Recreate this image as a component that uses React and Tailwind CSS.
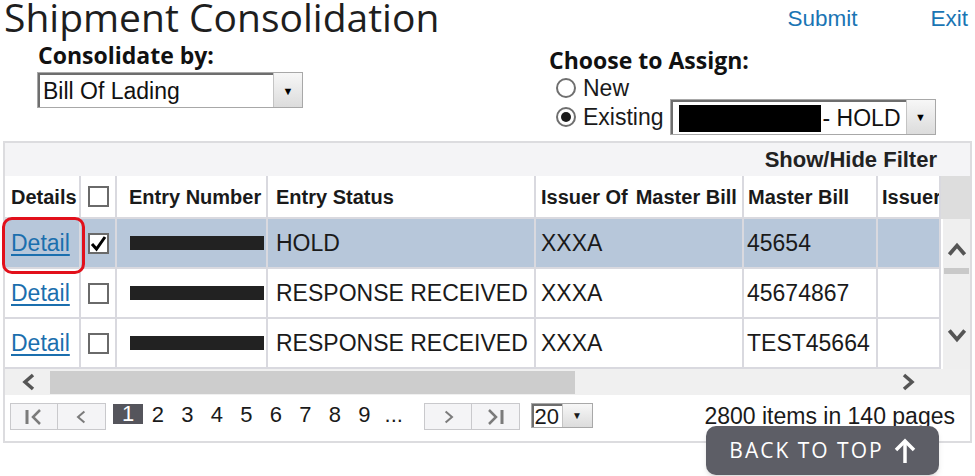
import React from "react";

const ARIAL = "font-['Liberation_Sans',Arial,sans-serif]";
const OPEN = "font-['Open_Sans',sans-serif]";

function Chevron({ dir = "up", className = "", size = 20, stroke = "#555", sw = 3.5 }) {
  const paths = {
    up: "M3 14 L10 6 L17 14",
    down: "M3 6 L10 14 L17 6",
    left: "M13 3 L5 10 L13 17",
    right: "M7 3 L15 10 L7 17",
  };
  return (
    <svg width={size} height={size} viewBox="0 0 20 20" className={className}>
      <path d={paths[dir]} fill="none" stroke={stroke} strokeWidth={sw} strokeLinecap="butt" strokeLinejoin="miter" />
    </svg>
  );
}

function SelectBox({ widthClass, children, btnW = "w-[29px]" }) {
  return (
    <div className={`flex h-[36px] ${widthClass} border border-[#a8a8a8] bg-white`}>
      <div className={`flex-1 flex items-center border-t-2 border-l-2 border-[#6e6e6e] pl-[3px] ${ARIAL} text-[23px] text-[#111] overflow-hidden whitespace-nowrap`}>
        {children}
      </div>
      <div className={`${btnW} flex items-center justify-center bg-gradient-to-b from-[#f7f7f7] to-[#dcdcdc] border-l border-[#c4c4c4]`}>
        <span className="text-[11px] text-black leading-none">▼</span>
      </div>
    </div>
  );
}

function Radio({ checked }) {
  return (
    <span className="w-[20px] h-[20px] rounded-full border-2 border-[#6f6f6f] bg-white flex items-center justify-center">
      {checked && <span className="w-[10px] h-[10px] rounded-full bg-[#1b1b1b]" />}
    </span>
  );
}

function Checkbox({ checked }) {
  return (
    <span className="w-[21px] h-[21px] border-2 border-[#6a6a6a] bg-white flex items-center justify-center">
      {checked && (
        <svg width="17" height="17" viewBox="0 0 17 17">
          <path d="M2 9 L6.5 14 L15 2" fill="none" stroke="#000" strokeWidth="3" />
        </svg>
      )}
    </span>
  );
}

const GRID = "grid grid-cols-[76px_36px_151px_268px_208px_134px_63px]";
const cellB = "border-r-2 border-b-2 border-[#d9d9df] flex items-center overflow-hidden whitespace-nowrap";

function Row({ status, issuer, bill, selected }) {
  const bg = selected ? "bg-[#b7c7da]" : "bg-white";
  return (
    <div className={`${GRID} h-[50px] ${bg} ${ARIAL} text-[23px] text-[#1a1a1a]`}>
      <div className={`${cellB} pl-[6px]`}>
        <a className="text-[#1b6fae] underline underline-offset-[3px]">Detail</a>
      </div>
      <div className={`${cellB} justify-center`}>
        <Checkbox checked={selected} />
      </div>
      <div className={`${cellB} pl-[13px]`}>
        <span className="w-[134px] h-[14px] bg-[#222]" />
      </div>
      <div className={`${cellB} pl-[8px]`}>{status}</div>
      <div className={`${cellB} pl-[5px]`}>{issuer}</div>
      <div className={`${cellB} pl-[3px]`}>{bill}</div>
      <div className={`${cellB} border-r-0`} />
    </div>
  );
}

export default function App() {
  const hcell = "border-r-2 border-b-2 border-[#d9d9df] flex items-center whitespace-nowrap overflow-hidden";
  return (
    <div className="relative w-[975px] h-[476px] overflow-hidden bg-white text-[#1a1a1a]">
      {/* Title row */}
      <div className="flex justify-between items-start h-[42px]">
        <h1 className={`${OPEN} text-[39px] leading-[34px] ml-[4px] text-[#1e1e1e] whitespace-nowrap`}>
          Shipment Consolidation
        </h1>
        <div className={`flex gap-[73px] mr-[7px] mt-[7px] ${ARIAL} text-[22.5px] leading-[24px] text-[#1a75b4]`}>
          <a>Submit</a>
          <a>Exit</a>
        </div>
      </div>

      {/* Controls */}
      <div className="flex h-[99px]">
        <div className="w-[549px] pl-[37px]">
          <div className={`${OPEN} font-bold text-[23px] leading-[26px] pl-[1px] text-[#111]`}>Consolidate by:</div>
          <div className="mt-[4px]">
            <SelectBox widthClass="w-[266px]">Bill Of Lading</SelectBox>
          </div>
        </div>
        <div className="flex-1">
          <div className={`${OPEN} font-bold text-[23px] leading-[26px] mt-[5px] text-[#111]`}>Choose to Assign:</div>
          <div className={`flex items-center gap-[7px] ml-[7px] mt-[4px] h-[22px] ${ARIAL} text-[23px]`}>
            <Radio />
            <span>New</span>
          </div>
          <div className={`flex items-center ml-[7px] mt-[0px] ${ARIAL} text-[23px]`}>
            <Radio checked />
            <span className="ml-[7px]">Existing</span>
            <div className="ml-[6px]">
              <SelectBox widthClass="w-[266px]">
                <span className="w-[142px] h-[27px] bg-black shrink-0 mt-[1px] ml-[3px]" />
                <span className="ml-[2px]">- HOLD</span>
              </SelectBox>
            </div>
          </div>
        </div>
      </div>

      {/* Grid container */}
      <div className="ml-[3px] w-[969px] border-2 border-[#dcdcdf] bg-white">
        <div className={`h-[33px] bg-[#f4f4f6] flex items-center justify-end pr-[33px] ${ARIAL} font-bold text-[22px] text-[#222]`}>
          Show/Hide Filter
        </div>
        <div className="flex">
          <div className="w-[936px]">
            <div className={`${GRID} h-[43px] bg-white ${ARIAL} font-bold text-[20px] text-[#1a1a1a]`}>
              <div className={`${hcell} pl-[6px]`}>Details</div>
              <div className={`${hcell} justify-center`}>
                <Checkbox />
              </div>
              <div className={`${hcell} pl-[12px]`}>Entry Number</div>
              <div className={`${hcell} pl-[8px]`}>Entry Status</div>
              <div className={`${hcell} pl-[5px]`}>
                <span>Issuer Of</span>
                <span className="ml-[8px]">Master Bill</span>
              </div>
              <div className={`${hcell} pl-[4px]`}>Master Bill</div>
              <div className={`${hcell} pl-[4px] border-r-0`}>Issuer</div>
            </div>
            <Row status="HOLD" issuer="XXXA" bill="45654" selected />
            <Row status="RESPONSE RECEIVED" issuer="XXXA" bill="45674867" />
            <Row status="RESPONSE RECEIVED" issuer="XXXA" bill="TEST45664" />
          </div>
          <div className="w-[29px] flex flex-col">
            <div className="h-[43px] bg-[#dddddd]" />
            <div className="flex-1 bg-[#efefef] ml-[2px] flex flex-col items-center">
              <Chevron dir="up" size={22} className="mt-[20px]" />
              <div className="mt-[7px] w-[25px] h-[6px] bg-[#c9c9c9]" />
              <Chevron dir="down" size={22} className="mt-[50px]" />
            </div>
          </div>
        </div>
        {/* horizontal scrollbar */}
        <div className="h-[26px] bg-[#f0f0f0] flex items-center">
          <Chevron dir="left" size={20} className="ml-[15px]" />
          <div className="ml-[10px] w-[525px] h-[23px] bg-[#cdcdcd]" />
          <Chevron dir="right" size={20} className="ml-[322px]" />
        </div>
        {/* pager */}
        <div className={`h-[46px] flex items-start pt-[8px] ${ARIAL}`}>
          <div className="ml-[5px] flex h-[27px] border border-[#c9c9cc] bg-[#f4f4f6]">
            <div className="w-[47px] flex items-center justify-center border-r border-[#c9c9cc]">
              <svg width="22" height="18" viewBox="0 0 22 18">
                <path d="M4 2 V16" stroke="#7b7b7b" strokeWidth="3" />
                <path d="M17 2 L10 9 L17 16" fill="none" stroke="#7b7b7b" strokeWidth="2.5" />
              </svg>
            </div>
            <div className="w-[47px] flex items-center justify-center">
              <Chevron dir="left" size={16} stroke="#7b7b7b" sw={2.5} />
            </div>
          </div>
          <div className="ml-[7px] flex text-[22px] leading-[24px] text-[#1a1a1a]">
            <span className="w-[30px] h-[20px] mt-[1px] bg-[#55555c] text-white flex items-center justify-center">1</span>
            {["2", "3", "4", "5", "6", "7", "8", "9", "..."].map((n) => (
              <span key={n} className="w-[29.5px] text-center">{n}</span>
            ))}
          </div>
          <div className="ml-[15px] flex h-[27px] border border-[#c9c9cc] bg-[#f4f4f6]">
            <div className="w-[47px] flex items-center justify-center border-r border-[#c9c9cc]">
              <Chevron dir="right" size={16} stroke="#7b7b7b" sw={2.5} />
            </div>
            <div className="w-[47px] flex items-center justify-center">
              <svg width="22" height="18" viewBox="0 0 22 18">
                <path d="M5 2 L12 9 L5 16" fill="none" stroke="#7b7b7b" strokeWidth="2.5" />
                <path d="M18 2 V16" stroke="#7b7b7b" strokeWidth="3" />
              </svg>
            </div>
          </div>
          <div className="ml-[11px] flex h-[25px] border border-[#a8a8a8] bg-white">
            <div className="w-[30px] border-t-2 border-l-2 border-[#6e6e6e] text-[22px] leading-[22px] pl-[1px]">20</div>
            <div className="w-[30px] flex items-center justify-center bg-gradient-to-b from-[#f7f7f7] to-[#dcdcdc] border-l border-[#c4c4c4]">
              <span className="text-[10px] leading-none">▼</span>
            </div>
          </div>
          <div className="ml-auto mr-[15px] text-[23px] leading-[26px] text-[#1a1a1a]">2800 items in 140 pages</div>
        </div>
      </div>

      {/* Red highlight annotation */}
      <div className="absolute left-[2px] top-[217px] w-[83px] h-[57px] border-[3px] border-[#e2101b] rounded-[10px]" />

      {/* Back to top */}
      <div className={`absolute left-[706px] top-[426px] w-[233px] h-[49px] rounded-[10px] bg-[#5d5e66] flex items-center justify-center gap-[10px] ${OPEN} text-white text-[21px] tracking-[2px] shadow-md`}>
        <span>BACK TO TOP</span>
        <svg width="22" height="26" viewBox="0 0 22 26">
          <path d="M11 25 V4" stroke="#fff" strokeWidth="3.5" />
          <path d="M2 12 L11 3 L20 12" fill="none" stroke="#fff" strokeWidth="3.5" />
        </svg>
      </div>
    </div>
  );
}
